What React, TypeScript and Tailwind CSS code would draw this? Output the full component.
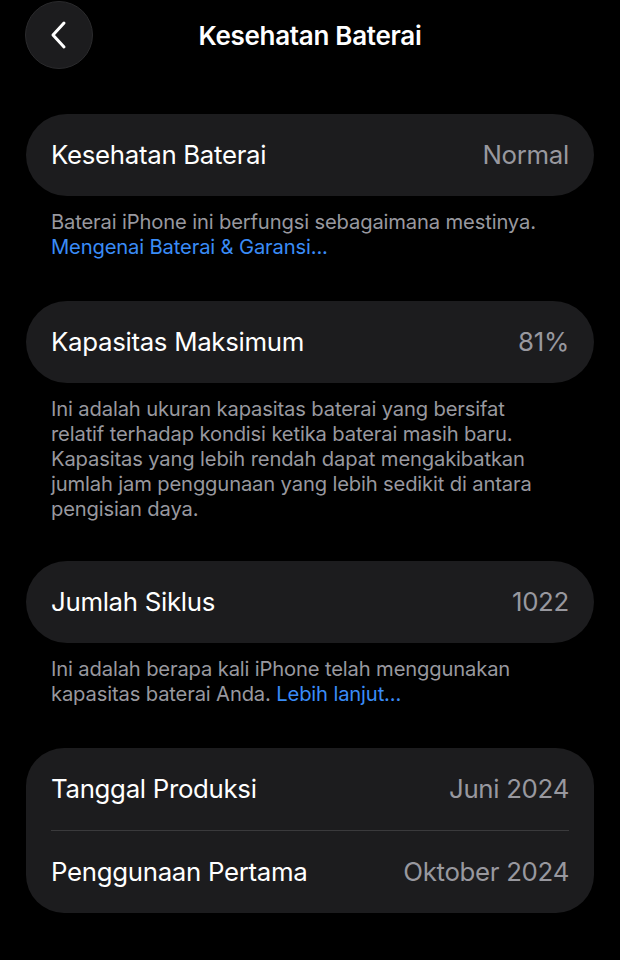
const font = { fontFamily: "Inter, 'Noto Sans', sans-serif" };

function Row({ label, value }: { label: string; value: string }) {
  return (
    <div className="flex h-[82px] items-center justify-between px-[25px]">
      <span className="text-[25.8px] tracking-[-0.3px] text-white">{label}</span>
      <span className="text-[25.8px] tracking-[-0.3px] text-[#98989f]">{value}</span>
    </div>
  );
}

function Footer({ children }: { children: React.ReactNode }) {
  return (
    <p className="px-[51px] pt-[13px] text-[20.2px] leading-[25px] tracking-[-0.15px] text-[#98989f]">
      {children}
    </p>
  );
}

export default function App() {
  return (
    <div className="min-h-[960px] w-[620px] bg-black" style={font}>
      <header className="relative flex h-[70px] items-center justify-center">
        <button className="absolute left-[25px] top-[1px] flex h-[68px] w-[68px] items-center justify-center rounded-full border border-[#2a2a2c] bg-[#1c1c1e]">
          <svg width="22" height="30" viewBox="0 0 22 30" fill="none">
            <path d="M16 3 L5 15 L16 27" stroke="white" strokeWidth="3" strokeLinecap="round" strokeLinejoin="round" />
          </svg>
        </button>
        <h1 className="text-[26px] font-semibold tracking-[-0.3px] text-white">Kesehatan Baterai</h1>
      </header>

      <section className="pt-[44px]">
        <div className="mx-[26px] rounded-[41px] bg-[#1c1c1e]">
          <Row label="Kesehatan Baterai" value="Normal" />
        </div>
        <Footer>
          Baterai iPhone ini berfungsi sebagaimana mestinya.
          <br />
          <span className="text-[#3a8cf7]">Mengenai Baterai &amp; Garansi...</span>
        </Footer>
      </section>

      <section className="pt-[42px]">
        <div className="mx-[26px] rounded-[41px] bg-[#1c1c1e]">
          <Row label="Kapasitas Maksimum" value="81%" />
        </div>
        <Footer>
          Ini adalah ukuran kapasitas baterai yang bersifat
          <br />
          relatif terhadap kondisi ketika baterai masih baru.
          <br />
          Kapasitas yang lebih rendah dapat mengakibatkan
          <br />
          jumlah jam penggunaan yang lebih sedikit di antara
          <br />
          pengisian daya.
        </Footer>
      </section>

      <section className="pt-[40px]">
        <div className="mx-[26px] rounded-[41px] bg-[#1c1c1e]">
          <Row label="Jumlah Siklus" value="1022" />
        </div>
        <Footer>
          Ini adalah berapa kali iPhone telah menggunakan
          <br />
          kapasitas baterai Anda. <span className="text-[#3a8cf7]">Lebih lanjut...</span>
        </Footer>
      </section>

      <section className="pt-[42px]">
        <div className="mx-[26px] rounded-[38px] bg-[#1c1c1e]">
          <Row label="Tanggal Produksi" value="Juni 2024" />
          <div className="mx-[25px] h-px bg-[#3a3a3c]" />
          <Row label="Penggunaan Pertama" value="Oktober 2024" />
        </div>
      </section>
    </div>
  );
}
